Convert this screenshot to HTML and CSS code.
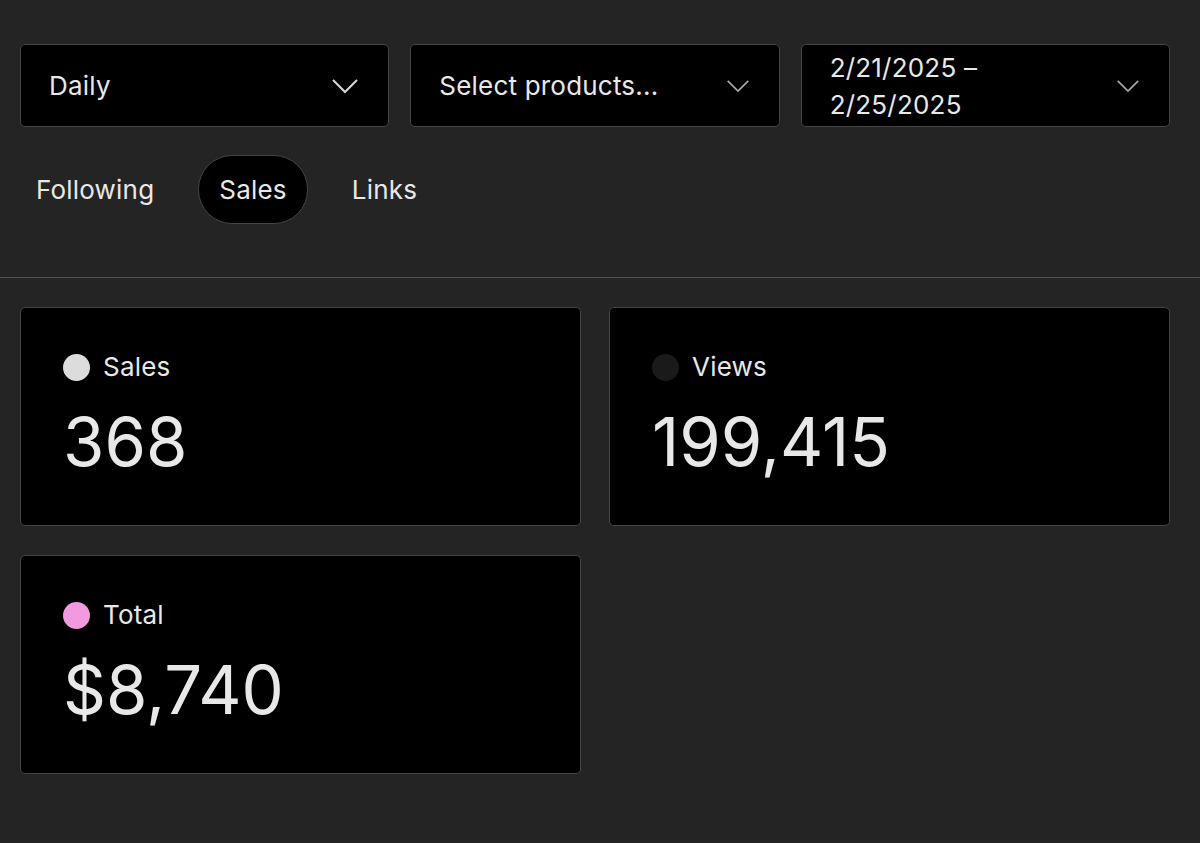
FILE: index.html
```html
<!DOCTYPE html>
<html lang="en">
<head>
    <meta charset="UTF-8">
    <meta name="viewport" content="width=device-width, initial-scale=1.0">
    <title>Analytics</title>
    <link rel="stylesheet" href="styles.css">
</head>
<body>

<div class="filters">
    <div class="select open">
        <span class="select-value">Daily</span>
        <svg class="chevron" viewBox="0 0 28 16"><path d="M2 2l12 12L26 2"/></svg>
    </div>
    <div class="select">
        <span class="select-value">Select products...</span>
        <svg class="chevron" viewBox="0 0 28 16"><path d="M2 2l12 12L26 2"/></svg>
    </div>
    <div class="select">
        <span class="select-value">2/21/2025 –<br>2/25/2025</span>
        <svg class="chevron" viewBox="0 0 28 16"><path d="M2 2l12 12L26 2"/></svg>
    </div>
</div>

<nav class="tabs">
    <a class="tab">Following</a>
    <a class="tab active">Sales</a>
    <a class="tab">Links</a>
</nav>

<hr class="divider">

<div class="stats">
    <div class="stat">
        <div class="stat-label"><span class="dot dot-sales"></span>Sales</div>
        <div class="stat-value">368</div>
    </div>
    <div class="stat">
        <div class="stat-label"><span class="dot dot-views"></span>Views</div>
        <div class="stat-value">199,415</div>
    </div>
    <div class="stat">
        <div class="stat-label"><span class="dot dot-total"></span>Total</div>
        <div class="stat-value">$8,740</div>
    </div>
</div>

</body>
</html>
```

FILE: styles.css
```css
body {
    font-family: Inter, "Noto Sans", sans-serif;
    margin: 0;
    padding: 44px 30px 0 20px;
    background-color: #242424;
    color: #e8e8e8;
}
.filters {
    display: grid;
    grid-template-columns: repeat(3, 1fr);
    gap: 21px;
}
.select {
    height: 83px;
    box-sizing: border-box;
    background-color: #000;
    border: 1px solid #444;
    border-radius: 5px;
    padding: 0 29px 0 28px;
    display: flex;
    align-items: center;
    justify-content: space-between;
    font-size: 26px;
    letter-spacing: 0.2px;
    line-height: 37px;
}
.chevron {
    width: 24px;
    height: 14px;
    flex-shrink: 0;
    fill: none;
    stroke: #a8a8a8;
    stroke-width: 2;
}
.select.open .chevron {
    width: 28px;
    height: 16px;
    stroke: #d8d8d8;
}
.tabs {
    display: flex;
    align-items: center;
    gap: 23px;
    margin-top: 28px;
    margin-left: -5px;
}
.tab {
    font-size: 26px;
    letter-spacing: 0.2px;
    padding: 0 20px;
    height: 67px;
    line-height: 67px;
    border-radius: 34px;
    border: 1px solid transparent;
}
.tab.active {
    background-color: #000;
    border-color: #444;
}
.divider {
    border: none;
    border-top: 1px solid #555;
    margin: 53px -30px 29px -20px;
}
.stats {
    display: grid;
    grid-template-columns: 1fr 1fr;
    column-gap: 28px;
    row-gap: 29px;
}
.stat {
    height: 219px;
    box-sizing: border-box;
    background-color: #000;
    border: 1px solid #444;
    border-radius: 5px;
    padding: 44px 42px;
}
.stat-label {
    display: flex;
    align-items: center;
    font-size: 26px;
    letter-spacing: 0.2px;
    line-height: 30px;
}
.dot {
    width: 27px;
    height: 27px;
    border-radius: 50%;
    margin-right: 13px;
}
.dot-sales { background-color: #dcdcdc; }
.dot-views { background-color: #1a1a1a; }
.dot-total { background-color: #f29ae0; }
.stat-value {
    font-size: 67px;
    line-height: 80px;
    margin-top: 20px;
}
```
